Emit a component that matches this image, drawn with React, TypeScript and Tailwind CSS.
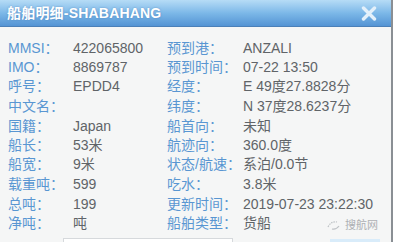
const rows: [string, string, string, string][] = [
  ["MMSI：", "422065800", "预到港：", "ANZALI"],
  ["IMO：", "8869787", "预到时间：", "07-22 13:50"],
  ["呼号：", "EPDD4", "经度：", "E 49度27.8828分"],
  ["中文名：", "", "纬度：", "N 37度28.6237分"],
  ["国籍：", "Japan", "船首向：", "未知"],
  ["船长：", "53米", "航迹向：", "360.0度"],
  ["船宽：", "9米", "状态/航速：", "系泊/0.0节"],
  ["载重吨：", "599", "吃水：", "3.8米"],
  ["总吨：", "199", "更新时间：", "2019-07-23 23:22:30"],
  ["净吨：", "吨", "船舶类型：", "货船"],
];

export default function App() {
  return (
    <div
      className="relative w-[393px] h-[242px] overflow-hidden bg-[#f5f6f6] border-r-2 border-[#8a8f94]"
      style={{ fontFamily: '"Liberation Sans", "Noto Sans CJK SC", sans-serif' }}
    >
      {/* header bar */}
      <div className="h-[27px] flex items-center justify-between pl-[7px] pr-[14px] bg-gradient-to-b from-[#b6dcf6] via-[#7cb8e8] to-[#5494d4] border-b border-[#4b80b8]">
        <span className="text-[14px] font-bold text-white tracking-[0.2px] [text-shadow:0_0_2px_rgba(60,110,170,0.6)]">
          船舶明细-SHABAHANG
        </span>
        <svg width="16" height="15" viewBox="0 0 16 15">
          <path d="M2.5 2 L13.5 13 M13.5 2 L2.5 13" stroke="#e3f0fa" strokeWidth="3.4" strokeLinecap="round" />
        </svg>
      </div>

      {/* detail rows */}
      <div className="pt-[11px] text-[14px] leading-none">
        {rows.map(([l1, v1, l2, v2], i) => (
          <div key={i} className={`flex items-center h-[19.3px] ${i === 4 || i === 8 ? "mt-[1px]" : ""}`}>
            <span className="w-[73px] pl-[8px] text-[#5996d2] whitespace-nowrap">{l1}</span>
            <span className="w-[94px] text-[#606468] whitespace-nowrap">{v1}</span>
            <span className="w-[76px] text-[#5996d2] whitespace-nowrap">{l2}</span>
            <span className="text-[#606468] whitespace-nowrap">{v2}</span>
          </div>
        ))}
      </div>

      {/* watermark */}
      <div className="absolute left-[326px] top-[217px] flex items-center gap-[3px] opacity-60">
        <svg width="16" height="12" viewBox="0 0 16 12">
          <path d="M2 8 Q5 2 11 3" stroke="#9aa0a6" strokeWidth="1.2" fill="none" strokeDasharray="1.5 1" />
          <path d="M6 10 Q10 11 13 7" stroke="#9aa0a6" strokeWidth="1.2" fill="none" />
        </svg>
        <span className="text-[11px] text-[#7d8288]">搜航网</span>
      </div>

      {/* bottom controls (cut off) */}
      <div className="absolute left-[63px] top-[238px] w-[170px] h-[10px] bg-white border border-[#d6d9dc]" />
      <div className="absolute left-[330px] top-[239px] w-[50px] h-[10px] bg-[#d9ecfa]" />
    </div>
  );
}
